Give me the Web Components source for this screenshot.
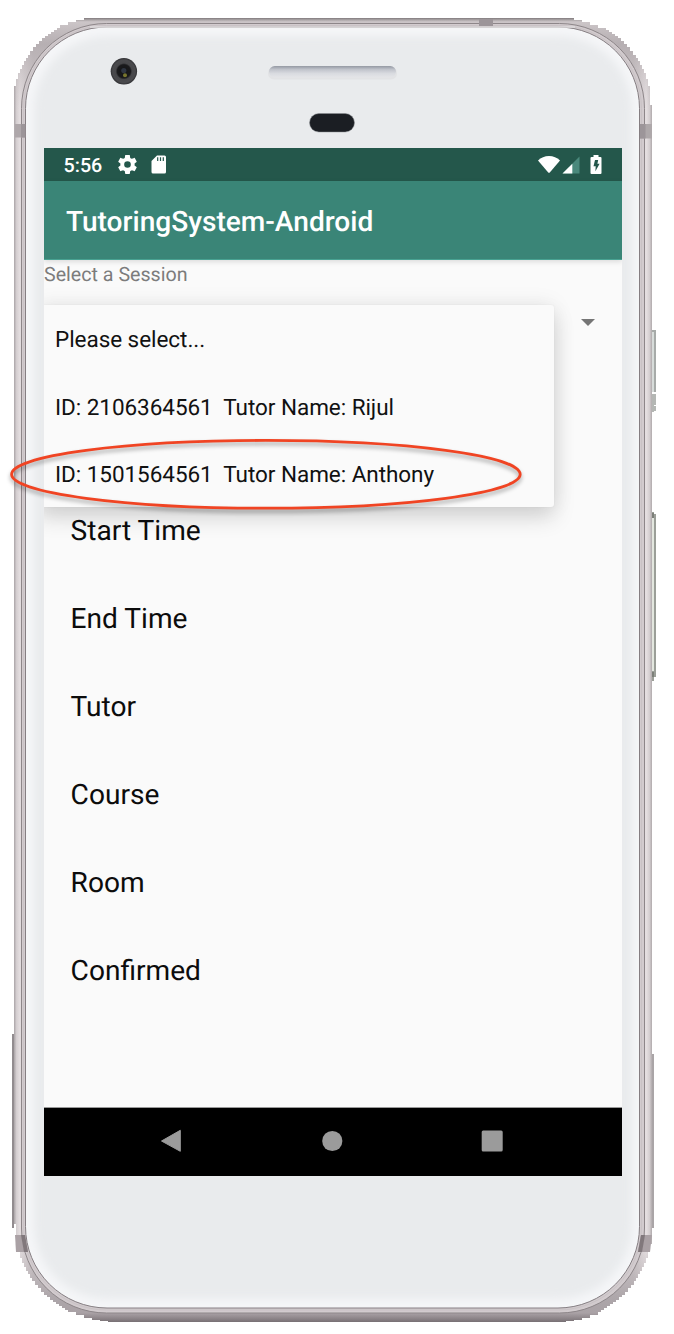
<!DOCTYPE html>
<html lang="en">
<head>
<meta charset="utf-8">
<title>TutoringSystem-Android</title>
<style>
body{margin:0;background:#fff;font-family:Roboto,"Liberation Sans",sans-serif;color:#111;text-rendering:geometricPrecision}
</style>
</head>
<body>
<phone-frame>
  <phone-screen>
    <status-bar>5:56</status-bar>
    <app-bar>TutoringSystem-Android</app-bar>
    <session-form label="Select a Session">
      <session-menu>
        <menu-option>Please select...</menu-option>
        <menu-option>ID: 2106364561&nbsp; Tutor Name: Rijul</menu-option>
        <menu-option>ID: 1501564561&nbsp; Tutor Name: Anthony</menu-option>
      </session-menu>
      <field-label slot="fields">Start Time</field-label>
      <field-label slot="fields">End Time</field-label>
      <field-label slot="fields">Tutor</field-label>
      <field-label slot="fields">Course</field-label>
      <field-label slot="fields">Room</field-label>
      <field-label slot="fields">Confirmed</field-label>
    </session-form>
    <nav-bar></nav-bar>
  </phone-screen>
  <red-mark slot="mark"></red-mark>
</phone-frame>
<script>
function define(name, html, setup){
  const t=document.createElement('template');
  t.innerHTML=html;
  customElements.define(name,class extends HTMLElement{
    constructor(){
      super();
      this.attachShadow({mode:'open'}).append(t.content.cloneNode(true));
    }
    connectedCallback(){ if(setup) setup(this,this.shadowRoot); }
  });
}

/* Points of one corner, descending in small stairs */
function corner(rad){
  const list=[];
  let x=0;
  while(x<rad){
    const y=rad-Math.sqrt(Math.max(0,rad*rad-(rad-x)*(rad-x)));
    list.push([x,y]);
    x+=y>rad*0.45?2:(y>rad*0.12?3:8);
  }
  list.push([rad,0]);
  return list;
}
function steppedOutline(l,t,r,b,topRad,bottomRad){
  const pts=[];
  const stairs=(list,fx,fy)=>{
    let prev=null;
    for(const [x,y] of list){
      if(prev) pts.push([fx(prev[0]),fy(Math.round(y))]);
      pts.push([fx(x),fy(Math.round(y))]);
      prev=[x,y];
    }
  };
  const top=corner(topRad), bottom=corner(bottomRad);
  stairs(top,x=>l+x,y=>t+y);
  stairs([...top].reverse(),x=>r-x,y=>t+y);
  stairs(bottom,x=>r-x,y=>b-y);
  stairs([...bottom].reverse(),x=>l+x,y=>b-y);
  return 'M'+pts.map(p=>p.join(' ')).join('L')+'Z';
}

define('phone-frame',`
<style>
:host{display:block;position:relative;box-sizing:border-box;width:674px;height:1334px;padding:148px 52px 158px 44px;overflow:hidden}
svg{position:absolute;left:0;top:0;display:block}
</style>
<svg width="674" height="1334" viewBox="0 0 674 1334">
  <defs>
    <linearGradient id="edge" gradientUnits="userSpaceOnUse" x1="14" x2="652" y1="0" y2="0">
      <stop offset="0" stop-color="#aaa4a7"/><stop offset=".004" stop-color="#d5cfd1"/><stop offset=".009" stop-color="#e3dddf"/><stop offset=".03" stop-color="#c9c2c5"/>
      <stop offset=".97" stop-color="#c9c2c5"/><stop offset=".991" stop-color="#e5dfe1"/><stop offset=".996" stop-color="#d5cfd1"/><stop offset="1" stop-color="#b0aaac"/>
    </linearGradient>
    <linearGradient id="vert" gradientUnits="userSpaceOnUse" x1="0" x2="0" y1="18" y2="1322">
      <stop offset="0" stop-color="#7f797b"/><stop offset=".003" stop-color="#cdc7c9" stop-opacity=".7"/><stop offset=".02" stop-color="#aaa3a6" stop-opacity=".6"/><stop offset=".07" stop-color="#bdb6b8" stop-opacity="0"/>
      <stop offset=".94" stop-color="#bdb6b8" stop-opacity="0"/><stop offset=".98" stop-color="#a39ca0" stop-opacity=".7"/><stop offset=".993" stop-color="#aaa2a6"/><stop offset=".997" stop-color="#8f878b"/><stop offset="1" stop-color="#777074"/>
    </linearGradient>
    <filter id="soft" x="-5%" y="-5%" width="110%" height="110%"><feGaussianBlur stdDeviation="4"/></filter>
    <clipPath id="face"><rect x="26" y="27.500" width="613" height="1280" rx="81"/></clipPath>
    <linearGradient id="spk" x2="0" y2="1"><stop offset="0" stop-color="#9499a3"/><stop offset=".3" stop-color="#c0c3cb"/><stop offset=".65" stop-color="#d9dbe0"/><stop offset="1" stop-color="#e4e5e8"/></linearGradient>
    <radialGradient id="lens"><stop offset="0" stop-color="#141416"/><stop offset=".5" stop-color="#1a1a1c"/><stop offset=".62" stop-color="#47474a"/><stop offset=".85" stop-color="#4a4a4d"/><stop offset="1" stop-color="#303033"/></radialGradient>
  </defs>
  <g shape-rendering="crispEdges">
    <rect x="12" y="1034" width="2" height="194" fill="#928c8f"/>
    <rect x="652" y="1054" width="2" height="174" fill="#aaa5a7"/>
    <path d="M651 330h5v62h-5z" fill="#a7aba9"/><path d="M652 332h2v60h-2z" fill="#d7dcda"/>
    <path d="M652 394h4v11h-2v7h-2zM654 406h2v5h-2z" fill="#b4b7b4"/>
    <path d="M651 512h3v2h2v163h-2v4h-3z" fill="#9b9f98"/><path d="M651 518h3v153h-3z" fill="#e3e7df"/>
    <path d="M651 513h3v5h-3zM651 672h3v5h-3z" fill="#7c7f79"/>
    <path class="outer" fill="url(#edge)"/>
    <path class="outer" fill="url(#vert)"/>
  </g>
  <rect x="21.500" y="23.500" width="623" height="1289.500" rx="85" fill="#d2cbce" stroke="#8d8689"/>
  <rect x="23.500" y="25.500" width="618" height="1284.500" rx="83" fill="none" stroke="#c9c2c5"/>
  <rect x="25.500" y="27" width="614" height="1281" rx="81.500" fill="#f5f6f8" stroke="#857e82"/>
  <path d="M90 27H575" stroke="#dfdcde" stroke-width="1.500"/>
  <g clip-path="url(#face)"><rect x="34" y="36" width="598" height="1263" rx="74" fill="#e9ebed" filter="url(#soft)"/></g>
  <g fill="#9c9599">
    <path d="M15 124h10v13.500H15z" fill="#aea7aa"/><path d="M21 124h4.500v13.500H21z"/>
    <path d="M640 124h12v14.500h-12z" fill="#aea8aa"/><path d="M640 124h5.500v14.500H640z"/>
    <path d="M479 19h14v7h-14z"/>
    <path d="M15 1235h10l3 17H16z" fill="#aaa1a5"/><path d="M21 1235h4l3 17h-4z" fill="#81787c"/>
    <path d="M641 1235h11l-2 17h-12z" fill="#aaa1a5"/><path d="M641 1235h4l-3 17h-4z" fill="#81787c"/>
  </g>
  <circle cx="123.900" cy="71.300" r="13.200" fill="url(#lens)"/>
  <circle cx="123.800" cy="70.500" r="2.600" fill="#2e3542"/><circle cx="125" cy="75.200" r="2" fill="#77752e"/>
  <rect x="268" y="67" width="129" height="12.500" rx="6" fill="#e2e3e5"/>
  <rect x="269" y="66" width="127" height="11.500" rx="5.750" fill="url(#spk)"/>
  <rect x="309.500" y="113.500" width="45" height="18.500" rx="9.250" fill="#1b1e23" stroke="#8b8e92" stroke-width=".5"/>
</svg>
<slot></slot><slot name="mark"></slot>`,
(el,root)=>root.querySelectorAll('.outer').forEach(p=>p.setAttribute('d',steppedOutline(14,18,652,1322,87,98))));

define('phone-screen',`
<style>:host{display:flex;flex-direction:column;position:relative;width:578px;height:1028px;background:#fafafa;overflow:hidden}</style>
<slot></slot>`);

define('status-bar',`
<style>
:host{display:flex;align-items:center;box-sizing:border-box;height:33px;flex:none;padding:0 19px 0 19.500px;background:#24574b;color:#fff;font-size:19.700px;font-weight:500;line-height:33px}
span{width:54.500px;padding-top:1px}
.gear{margin-right:14px}.wifi{margin-left:auto;margin-right:2px}.sig{margin-right:9px}
svg{display:block;flex:none}
</style>
<span><slot></slot></span>
<svg class="gear" width="19" height="19" viewBox="2 2 20 20" fill="#fff"><path d="M19.430 12.980c.04-.32.07-.64.07-.98s-.03-.66-.07-.98l2.110-1.650c.19-.15.24-.42.12-.64l-2-3.460c-.12-.22-.39-.3-.61-.22l-2.490 1c-.52-.4-1.080-.73-1.690-.98l-.38-2.650C14.460 2.180 14.250 2 14 2h-4c-.25 0-.46.18-.49.42l-.38 2.650c-.61.25-1.170.59-1.690.98l-2.490-1c-.23-.09-.49 0-.61.22l-2 3.460c-.13.22-.07.49.12.64l2.110 1.650c-.04.32-.07.65-.07.98s.03.66.07.98l-2.110 1.650c-.19.15-.24.42-.12.64l2 3.460c.12.22.39.3.61.22l2.490-1c.52.4 1.080.73 1.690.98l.38 2.650c.03.24.24.42.49.42h4c.25 0 .46-.18.49-.42l.38-2.650c.61-.25 1.170-.59 1.690-.98l2.490 1c.23.09.49 0 .61-.22l2-3.460c.12-.22.07-.49-.12-.64zM12 15.500A3.500 3.500 0 1 1 12 8.500a3.500 3.500 0 0 1 0 7z"/></svg>
<svg width="16" height="19" viewBox="0 0 16 19"><path d="M6 .5h7.500Q15 .5 15 2v15q0 1.500-1.500 1.500H2Q.5 18.500.5 17V6z" fill="#fff"/><path d="M6.700 2.300v3.600M9.500 2.300v3.600M12.300 2.300v3.600" stroke="#24574b" stroke-width="1.200"/></svg>
<svg class="wifi" width="22" height="18" viewBox="0 0 22 18"><path d="M0 4.500Q4.500 0 11 0T22 4.500L12 16.300q-1 1-2 0z" fill="#fff"/></svg>
<svg class="sig" width="18" height="18" viewBox="0 0 18 18"><path d="M17.500.5v17H.5z" fill="#4a897c"/><path d="M10.300 7.700v9.800H.5z" fill="#fff"/></svg>
<svg width="14" height="20" viewBox="0 0 14 20"><path d="M4.500 0h5v2h2q1 0 1 1v15q0 1-1 1h-9q-1 0-1-1v-15q0-1 1-1h2z" fill="#fff"/><path d="M6 5h3.200L8.400 8.700h2.200L6.400 16.200l.3-5H4.500z" fill="#24574b"/></svg>`);

define('app-bar',`
<style>:host{display:flex;align-items:center;position:relative;z-index:1;box-sizing:border-box;height:79px;flex:none;padding:2px 22px 0;background:#3a8577;border-bottom:1px solid #48a292;box-shadow:0 2px 5px rgba(0,0,0,.12);color:#fff;font-size:28.100px;font-weight:500;white-space:nowrap}</style>
<slot></slot>`);

define('session-form',`
<style>
:host{display:block;flex:1;position:relative;min-height:0}
.caption{box-sizing:border-box;height:28px;padding-top:1px;line-height:27px;font-size:19.650px;color:#7c7c7c}
.spinner{display:flex;justify-content:flex-end;align-items:center;height:68px;padding-right:27px}
.fields{padding:131px 0 0 26.600px}
</style>
<div class="caption"></div>
<div class="spinner"><svg width="14" height="7" viewBox="0 0 14 7"><path d="M0 0h14L7 7z" fill="#757575"/></svg></div>
<div class="fields"><slot name="fields"></slot></div>
<slot></slot>`,(el,root)=>{root.querySelector('.caption').textContent=el.getAttribute('label');});

define('session-menu',`
<style>:host{display:block;position:absolute;left:-6px;top:45px;box-sizing:border-box;width:516px;height:202px;padding-left:17px;background:#fafafa;border-radius:3px;box-shadow:0 11px 22px rgba(0,0,0,.14),0 0 22px rgba(0,0,0,.08),0 0 2px rgba(0,0,0,.06)}</style>
<slot></slot>`);
define('menu-option',`
<style>:host{display:flex;align-items:center;height:67.500px;font-size:22.500px;letter-spacing:-.05px;white-space:pre}span{padding-top:3px}</style><span><slot></slot></span>`);
define('field-label',`
<style>:host{display:block;height:88px;line-height:88px;font-size:28.100px;color:#0c0c0c}</style><slot></slot>`);

define('nav-bar',`
<style>:host{display:flex;align-items:center;justify-content:space-between;box-sizing:border-box;height:69px;flex:none;padding:0 119px 2px 116px;background:#000;border-top:1px solid #999}svg{display:block}</style>
<svg width="22" height="24" viewBox="0 0 22 24"><path d="M20.300 1.300v21L1.500 12z" fill="#9b9b9b" stroke="#9b9b9b" stroke-linejoin="round"/></svg>
<svg width="22" height="22" viewBox="0 0 22 22"><circle cx="11.300" cy="11" r="10.100" fill="#9b9b9b"/></svg>
<svg width="22" height="22" viewBox="0 0 22 22"><rect x=".7" y=".5" width="21" height="21" rx="1.500" fill="#9b9b9b"/></svg>`);

define('red-mark',`
<style>:host{display:block;position:absolute;left:0;top:430px;width:540px;height:90px}svg{display:block;filter:drop-shadow(0 3px 2px rgba(0,0,0,.35))}</style>
<svg width="540" height="90" viewBox="0 0 540 90"><ellipse cx="265.900" cy="44.300" rx="254.300" ry="33.900" fill="none" stroke="#f04423" stroke-width="2.800"/></svg>`);
</script>
</body>
</html>
